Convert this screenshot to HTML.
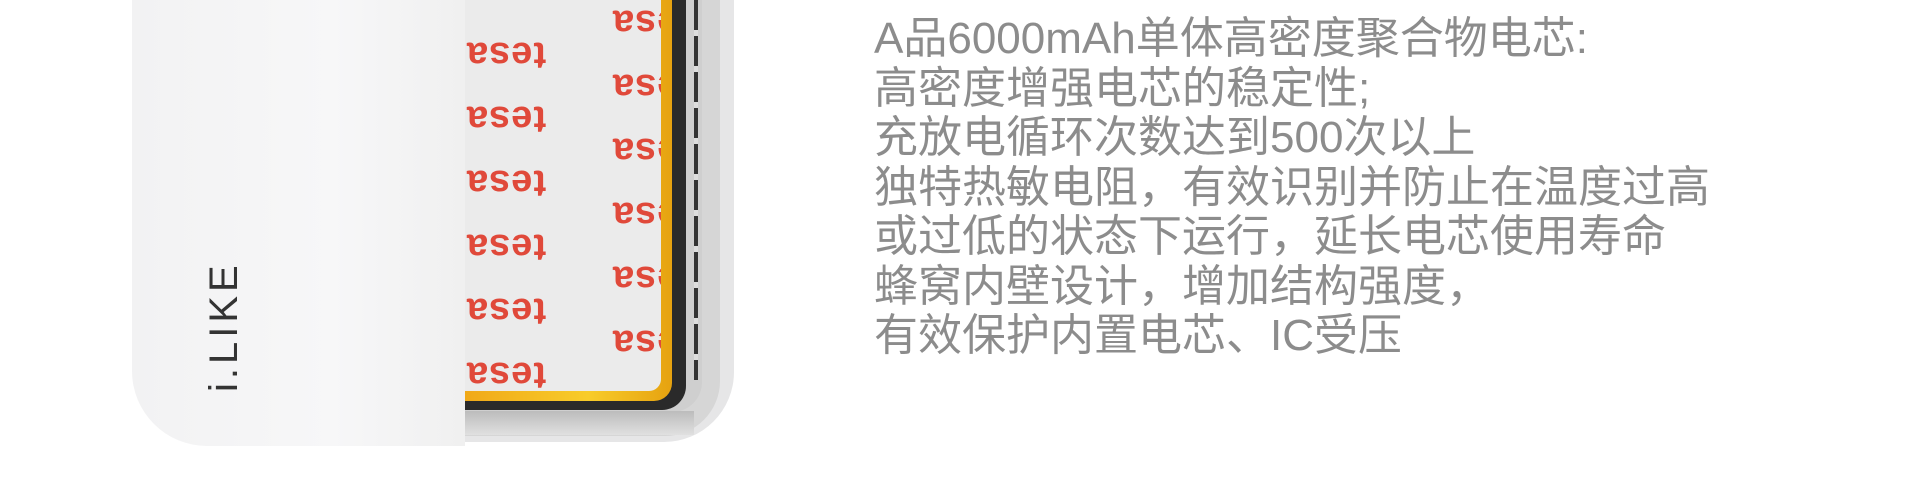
<!DOCTYPE html>
<html><head><meta charset="utf-8"><style>
html,body{margin:0;padding:0;background:#fff;}
body{width:1920px;height:500px;position:relative;overflow:hidden;font-family:"Liberation Sans","Noto Sans CJK SC",sans-serif;}
.abs{position:absolute;}
.t{position:absolute;color:#e0493a;font-weight:bold;font-size:38px;transform:rotate(180deg);font-family:"Liberation Sans",sans-serif;letter-spacing:1px;}
.txt{position:absolute;left:874px;top:14px;font-size:44px;line-height:49.5px;color:#8c8c8c;font-family:"Liberation Sans","Noto Sans CJK SC",sans-serif;white-space:nowrap;}
</style></head><body>
<div class="abs" style="left:300px;top:-60px;width:434px;height:502px;background:#e6e6e7;border-radius:0 0 70px 0;"></div>
<div class="abs" style="left:462px;top:-60px;width:258px;height:496px;background:#d6d6d6;border-radius:0 0 55px 0;"></div>
<div class="abs" style="left:462px;top:-60px;width:240px;height:472px;background:#cfcfcf;border-radius:0 0 30px 0;"></div>
<div class="abs" style="left:462px;top:-60px;width:224px;height:470px;background:#2a2a2a;border-radius:0 0 24px 0;"></div>
<div class="abs" style="left:694px;top:0px;width:4px;height:380px;background:repeating-linear-gradient(#333 0 30px,#ddd 30px 36px);"></div>
<div class="abs" style="left:462px;top:411px;width:232px;height:24px;background:linear-gradient(#bcbcbc,#e0e0e0);"></div>
<div class="abs" style="left:462px;top:-60px;width:210px;height:461px;background:linear-gradient(90deg,#f0a818,#f8cc2a 60%,#e6a210);border-radius:0 0 18px 0;"></div>
<div class="abs" style="left:462px;top:-60px;width:199px;height:451px;background:#ebebeb;border-radius:0 0 12px 0;overflow:hidden;">
<div class="t" style="left:4px;top:93px;">tesa</div>
<div class="t" style="left:4px;top:157px;">tesa</div>
<div class="t" style="left:4px;top:221px;">tesa</div>
<div class="t" style="left:4px;top:285px;">tesa</div>
<div class="t" style="left:4px;top:349px;">tesa</div>
<div class="t" style="left:4px;top:413px;">tesa</div>
<div class="t" style="left:150px;top:61px;">tesa</div>
<div class="t" style="left:150px;top:125px;">tesa</div>
<div class="t" style="left:150px;top:189px;">tesa</div>
<div class="t" style="left:150px;top:253px;">tesa</div>
<div class="t" style="left:150px;top:317px;">tesa</div>
<div class="t" style="left:150px;top:381px;">tesa</div>
</div>
<div class="abs" style="left:132px;top:-60px;width:333px;height:506px;background:linear-gradient(90deg,#f2f2f3,#f7f7f8 60%,#f0f0f0);border-radius:0 0 0 75px;"></div>
<div class="abs" style="left:202px;top:392px;font-size:40px;color:#333;transform:rotate(-90deg);transform-origin:left top;letter-spacing:4px;font-family:'Liberation Sans',sans-serif;">i.LIKE</div>
<div class="txt">A品6000mAh单体高密度聚合物电芯:<br>高密度增强电芯的稳定性;<br>充放电循环次数达到500次以上<br>独特热敏电阻，有效识别并防止在温度过高<br>或过低的状态下运行，延长电芯使用寿命<br>蜂窝内壁设计，增加结构强度，<br>有效保护内置电芯、IC受压</div>
</body></html>
